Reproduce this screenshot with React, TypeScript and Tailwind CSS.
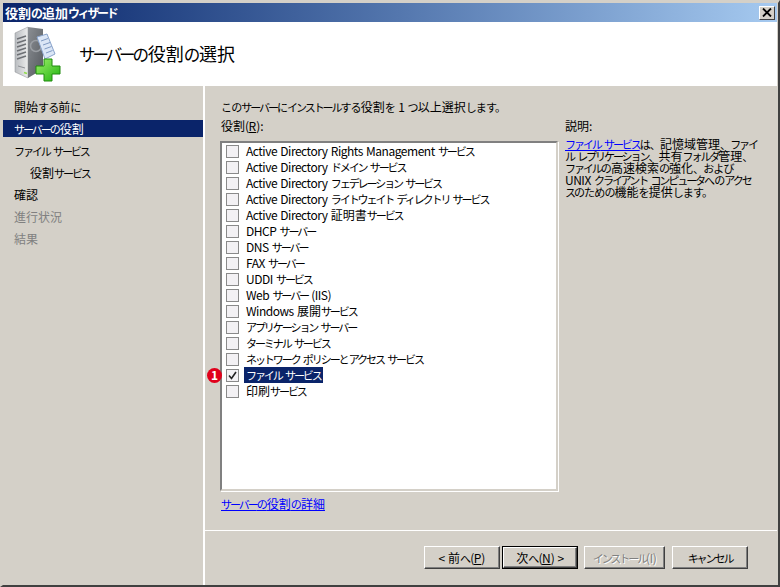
const roles = [
  'Active Directory Rights Management サービス',
  'Active Directory ドメイン サービス',
  'Active Directory フェデレーション サービス',
  'Active Directory ライトウェイト ディレクトリ サービス',
  'Active Directory 証明書サービス',
  'DHCP サーバー',
  'DNS サーバー',
  'FAX サーバー',
  'UDDI サービス',
  'Web サーバー (IIS)',
  'Windows 展開サービス',
  'アプリケーション サーバー',
  'ターミナル サービス',
  'ネットワーク ポリシーとアクセス サービス',
  'ファイル サービス',
  '印刷サービス',
];

const steps = [
  { label: '開始する前に', cls: 'pl-[11px] text-black' },
  { label: 'サーバーの役割', cls: 'pl-[11px] bg-[#0a246a] text-white' },
  { label: 'ファイル サービス', cls: 'pl-[11px] text-black' },
  { label: '役割サービス', cls: 'pl-[27px] text-black' },
  { label: '確認', cls: 'pl-[11px] text-black' },
  { label: '進行状況', cls: 'pl-[11px] text-[#808080]' },
  { label: '結果', cls: 'pl-[11px] text-[#808080]' },
];

// the old UI font has narrow proportional kana, so each script run gets its own fit
function Jp({ text }: { text: string }) {
  const runs = text.match(/[\u30a0-\u30ff]+|[\u3000-\u309f]+|[\u4e00-\u9fff]+|[^\u3000-\u30ff\u4e00-\u9fff]+/g) ?? [];
  return (
    <>
      {runs.map((run, i) => {
        const c = run.charCodeAt(0);
        let cls = 'tracking-[-0.04em] [word-spacing:1px]';
        if (c >= 0x30a0 && c <= 0x30ff) cls = 'text-[0.92em] tracking-[-0.19em]';
        else if (c >= 0x3000 && c <= 0x309f) cls = 'text-[0.92em] tracking-[-0.08em]';
        else if (c >= 0x4e00) cls = 'tracking-[0em]';
        return (
          <span key={i} className={cls}>
            {run}
          </span>
        );
      })}
    </>
  );
}

function WizardIcon() {
  return (
    <svg width="54" height="58" viewBox="0 0 54 58" className="-mt-[2px] shrink-0">
      <defs>
        <linearGradient id="srv" x1="0" x2="1" y1="0" y2="0">
          <stop offset="0" stopColor="#b9bcc0" />
          <stop offset="1" stopColor="#eceded" />
        </linearGradient>
        <linearGradient id="srvSide" x1="0" x2="1" y1="0" y2="1">
          <stop offset="0" stopColor="#8b8f94" />
          <stop offset="1" stopColor="#55595e" />
        </linearGradient>
        <linearGradient id="plus" x1="0" x2="1" y1="0" y2="1">
          <stop offset="0" stopColor="#9ff06a" />
          <stop offset="1" stopColor="#1fb30f" />
        </linearGradient>
      </defs>
      {/* server box */}
      <path d="M5 9 L18 3 L18 54 L5 48 Z" fill="url(#srv)" stroke="#8a8d91" strokeWidth="0.5" />
      <path d="M18 3 L33 5 L33 45 L18 54 Z" fill="url(#srvSide)" />
      <path d="M7 15 L16 12 M7 19 L16 16 M7 23 L16 20 M7 27 L16 24 M7 31 L16 28 M7 35 L16 32" stroke="#6d7075" strokeWidth="1.4" />
      <path d="M8 42 L15 44" stroke="#8e9196" strokeWidth="1" />
      <path d="M14 48.5 L17 49.5" stroke="#8fdc4a" strokeWidth="1.5" />
      <circle cx="26" cy="22" r="5.5" fill="none" stroke="#9a9ea3" strokeWidth="1.5" />
      {/* document */}
      <path d="M27 13 L37 10 L45 30 L35 35 Z" fill="#dbe6f6" stroke="#8aa4cc" />
      <path d="M31 17 L38 14.5 M33 21 L40 18.5 M34.5 25 L41.5 22.5 M36 29 L42.5 26.5" stroke="#7f99c2" strokeWidth="1" />
      {/* plus */}
      <path d="M34 35 H42 V42 H50 V50 H42 V57 H34 V50 H26 V42 H34 Z" fill="url(#plus)" stroke="#1f8a0c" />
    </svg>
  );
}

function Bevel({ children, isDefault = false, w }: { children: React.ReactNode; isDefault?: boolean; w: string }) {
  return (
    <div className={`${w} h-[23px] ${isDefault ? 'border border-black' : ''}`}>
      <button className="flex h-full w-full items-center justify-center whitespace-pre border border-t-white border-l-white border-r-[#404040] border-b-[#404040] bg-[#d4d0c8] text-[12px] text-black shadow-[inset_-1px_-1px_0_#808080]">
        {children}
      </button>
    </div>
  );
}

export default function App() {
  const checked = 14;
  return (
    <div className="flex h-[587px] w-[780px] flex-col overflow-hidden border-t-[3px] border-r-2 border-b-2 border-l-[3px] border-t-[#d4d0c8] border-r-[#404040] border-b-[#404040] border-l-[#d4d0c8] bg-[#d4d0c8] pr-[1px] font-['Noto_Sans_CJK_JP','Liberation_Sans',sans-serif] text-[12px] leading-4 text-black">
      {/* title bar */}
      <div className="flex h-[19px] shrink-0 items-center justify-between bg-gradient-to-r from-[#0a246a] to-[#a6caf0] pr-[2px] pl-[2px]">
        <span className="text-[13px] font-bold text-white">
          <Jp text="役割の追加ウィザード" />
        </span>
        <div className="flex h-[14px] w-[16px] items-center justify-center border border-t-white border-l-white border-r-[#404040] border-b-[#404040] bg-[#d4d0c8]">
          <svg width="10" height="9" viewBox="0 0 10 9">
            <path d="M1 0.5 L9 8.5 M9 0.5 L1 8.5" stroke="#000" strokeWidth="1.8" />
          </svg>
        </div>
      </div>

      {/* header */}
      <div className="flex h-[64px] shrink-0 items-center bg-white pl-[7px]">
        <WizardIcon />
        <h1 className="ml-[15px] -mt-[2px] text-[18px] font-normal text-black">
          <Jp text="サーバーの役割の選択" />
        </h1>
      </div>

      <div className="flex min-h-0 flex-1">
        {/* left nav */}
        <div className="w-[200px] shrink-0 pt-[12px]">
          {steps.map((s) => (
            <div key={s.label} className={`mb-[5px] flex h-[17px] w-full items-center whitespace-pre ${s.cls}`}>
              <Jp text={s.label} />
            </div>
          ))}
        </div>

        {/* right side */}
        <div className="flex min-w-0 flex-1 flex-col border-l-2 border-l-white">
          <div className="flex h-[444px] shrink-0 pt-[13px] pl-[15px]">
            <div className="w-[338px] shrink-0">
              <div className="h-[16px] pl-[1px]">
                <Jp text="このサーバーにインストールする役割を 1 つ以上選択します。" />
              </div>
              <div className="mt-[3px] h-[16px] pl-[1px]">
                <Jp text="役割(" />
                <span className="underline">R</span>):
              </div>
              <div className="relative mt-[7px] h-[350px] border-2 border-t-[#808080] border-l-[#808080] border-r-[#d4d0c8] border-b-[#d4d0c8] bg-white pl-[4px] shadow-[1px_1px_0_#fff]">
                {roles.map((r, i) => (
                  <div key={r} className="flex h-[16px] items-center">
                    <div className="relative flex h-[13px] w-[13px] shrink-0 items-center justify-center border border-[#8a8a8a] bg-[#f3f1f4]">
                      {i === checked && (
                        <svg width="9" height="9" viewBox="0 0 9 9">
                          <path d="M1 4.5 L3.5 7.5 L8 1" fill="none" stroke="#222" strokeWidth="1.6" />
                        </svg>
                      )}
                      {i === checked && (
                        <span className="absolute top-[-2px] left-[-20px] flex h-[15px] w-[15px] items-center justify-center rounded-full bg-[#e0001b] text-[12px] leading-none font-bold text-white">
                          1
                        </span>
                      )}
                    </div>
                    <span className={`ml-[5px] px-[2px] whitespace-pre ${i === checked ? 'bg-[#0a246a] text-white' : 'text-black'}`}>
                      <Jp text={r} />
                    </span>
                  </div>
                ))}
              </div>
              <div className="mt-[5px] h-[16px] pl-[1px] text-[#0000ff] underline">
                <Jp text="サーバーの役割の詳細" />
              </div>
            </div>
            <div className="ml-[7px] w-[200px] pt-[19px]">
              <div className="h-[16px]">
                <Jp text="説明:" />
              </div>
              <div className="mt-[4px] text-[12px] leading-[12px] whitespace-pre">
                <span className="text-[#0000ff] underline">
                  <Jp text="ファイル サービス" />
                </span>
                <Jp text="は、記憶域管理、ファイ" />
                <br />
                <Jp text="ル レプリケーション、共有フォルダ管理、" />
                <br />
                <Jp text="ファイルの高速検索の強化、および" />
                <br />
                <Jp text="UNIX クライアント コンピュータへのアクセ" />
                <br />
                <Jp text="スのための機能を提供します。" />
              </div>
            </div>
          </div>

          <div className="h-[1px] w-full shrink-0 bg-white" />

          {/* buttons */}
          <div className="flex flex-1 items-start pt-[15px] pl-[219px]">
            <Bevel w="w-[76px]">
              <Jp text="&lt; 前へ(" />
              <span className="underline">P</span>)
            </Bevel>
            <div className="ml-[2px]">
              <Bevel w="w-[76px]" isDefault>
                <Jp text="次へ(" />
                <span className="underline">N</span>
                <Jp text=") &gt;" />
              </Bevel>
            </div>
            <div className="ml-[6px]">
              <Bevel w="w-[81px]">
                <span className="text-[#808080] [text-shadow:1px_1px_0_#fff]">
                  <Jp text="インストール(I)" />
                </span>
              </Bevel>
            </div>
            <div className="ml-[7px]">
              <Bevel w="w-[76px]">
                <Jp text="キャンセル" />
              </Bevel>
            </div>
          </div>
        </div>
      </div>
    </div>
  );
}
